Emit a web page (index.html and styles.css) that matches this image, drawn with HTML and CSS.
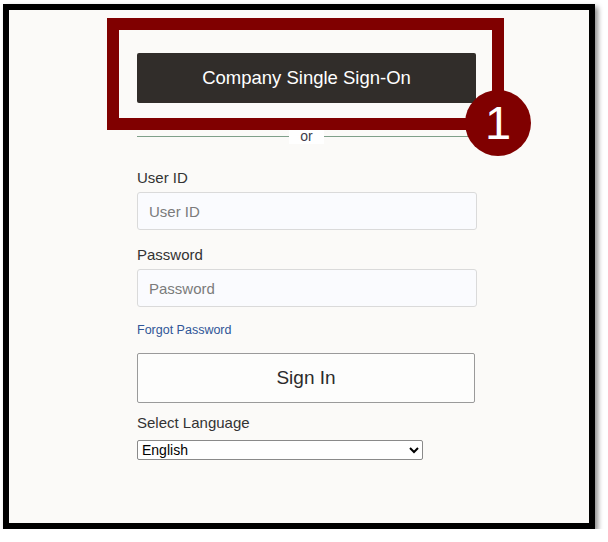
FILE: index.html
```html
<!DOCTYPE html>
<html>
<head>
    <meta charset="utf-8">
    <title>Sign In</title>
    <link rel="stylesheet" href="styles.css">
</head>
<body>
    <div class="frame">
        <div class="login">
            <button class="sso-btn">Company Single Sign-On</button>

            <div class="divider">
                <span class="line"></span>
                <span class="or">or</span>
                <span class="line"></span>
            </div>

            <label for="userId">User ID</label>
            <input type="text" id="userId" placeholder="User ID">

            <label for="password" class="pw-label">Password</label>
            <input type="password" id="password" placeholder="Password">

            <a href="#" class="forgot">Forgot Password</a>

            <button class="signin-btn">Sign In</button>

            <label for="lang" class="lang-label">Select Language</label>
            <select id="lang">
                <option>English</option>
                <option>Español</option>
                <option>Français</option>
            </select>
        </div>

        <!-- annotation overlay -->
        <div class="callout-box"></div>
        <div class="callout-num">1</div>
    </div>
</body>
</html>
```

FILE: styles.css
```css
body {
    margin: 0;
    background: #fff;
    font-family: "Liberation Sans", Arial, sans-serif;
}

.frame {
    position: relative;
    width: 580px;
    height: 513px;
    margin: 4px 0 0 3px;
    border: 6px solid #000;
    background: #fbfaf8;
    box-shadow: 3px 3px 5px rgba(0,0,0,0.45);
}

.login {
    width: 340px;
    margin-left: 128px;
    padding-top: 43px;
    display: flex;
    flex-direction: column;
    align-items: flex-start;
}

.sso-btn {
    width: 339px;
    height: 50px;
    background: #312d2a;
    color: #fff;
    border: none;
    border-radius: 2px;
    font-family: inherit;
    font-size: 18.5px;
    cursor: pointer;
}

.divider {
    width: 339px;
    height: 16px;
    margin-top: 25px;
    display: flex;
    align-items: center;
}

.divider .line {
    flex: 1;
    border-top: 1px solid #7fa08a;
}

.divider .or {
    background: #fff;
    color: #3d3d4a;
    font-size: 14px;
    line-height: 16px;
    padding: 0 11px;
}

label {
    display: block;
    margin-top: 25px;
    margin-bottom: 6px;
    font-size: 15px;
    line-height: 17px;
    color: #333;
}

.pw-label {
    margin-top: 16px;
}

input[type="text"], input[type="password"] {
    width: 340px;
    height: 38px;
    box-sizing: border-box;
    padding: 0 11px;
    border: 1px solid #dadada;
    border-radius: 3px;
    background: #fafbfe;
    font-family: inherit;
    font-size: 15px;
    color: #333;
}

input::placeholder {
    color: #7b7b7b;
}

.forgot {
    margin-top: 16px;
    font-size: 12.5px;
    line-height: 14px;
    color: #2f5597;
    text-decoration: none;
}

.signin-btn {
    width: 338px;
    height: 50px;
    margin-top: 16px;
    background: #fdfdfc;
    border: 1px solid #9a9a9a;
    border-radius: 2px;
    font-family: inherit;
    font-size: 19px;
    color: #2b2b2b;
    cursor: pointer;
}

.lang-label {
    margin-top: 11px;
    margin-bottom: 9px;
}

select {
    width: 286px;
    height: 20px;
    font-family: inherit;
    font-size: 14px;
    color: #000;
    background: #fff;
    border: 1px solid #8a8a8a;
    border-radius: 2px;
}

.callout-box {
    position: absolute;
    left: 98px;
    top: 8px;
    width: 373px;
    height: 88px;
    border: 12px solid #800000;
}

.callout-num {
    position: absolute;
    left: 456px;
    top: 80px;
    width: 66px;
    height: 66px;
    border-radius: 50%;
    background: #800000;
    color: #fff;
    font-size: 47px;
    line-height: 66px;
    text-align: center;
}
```
